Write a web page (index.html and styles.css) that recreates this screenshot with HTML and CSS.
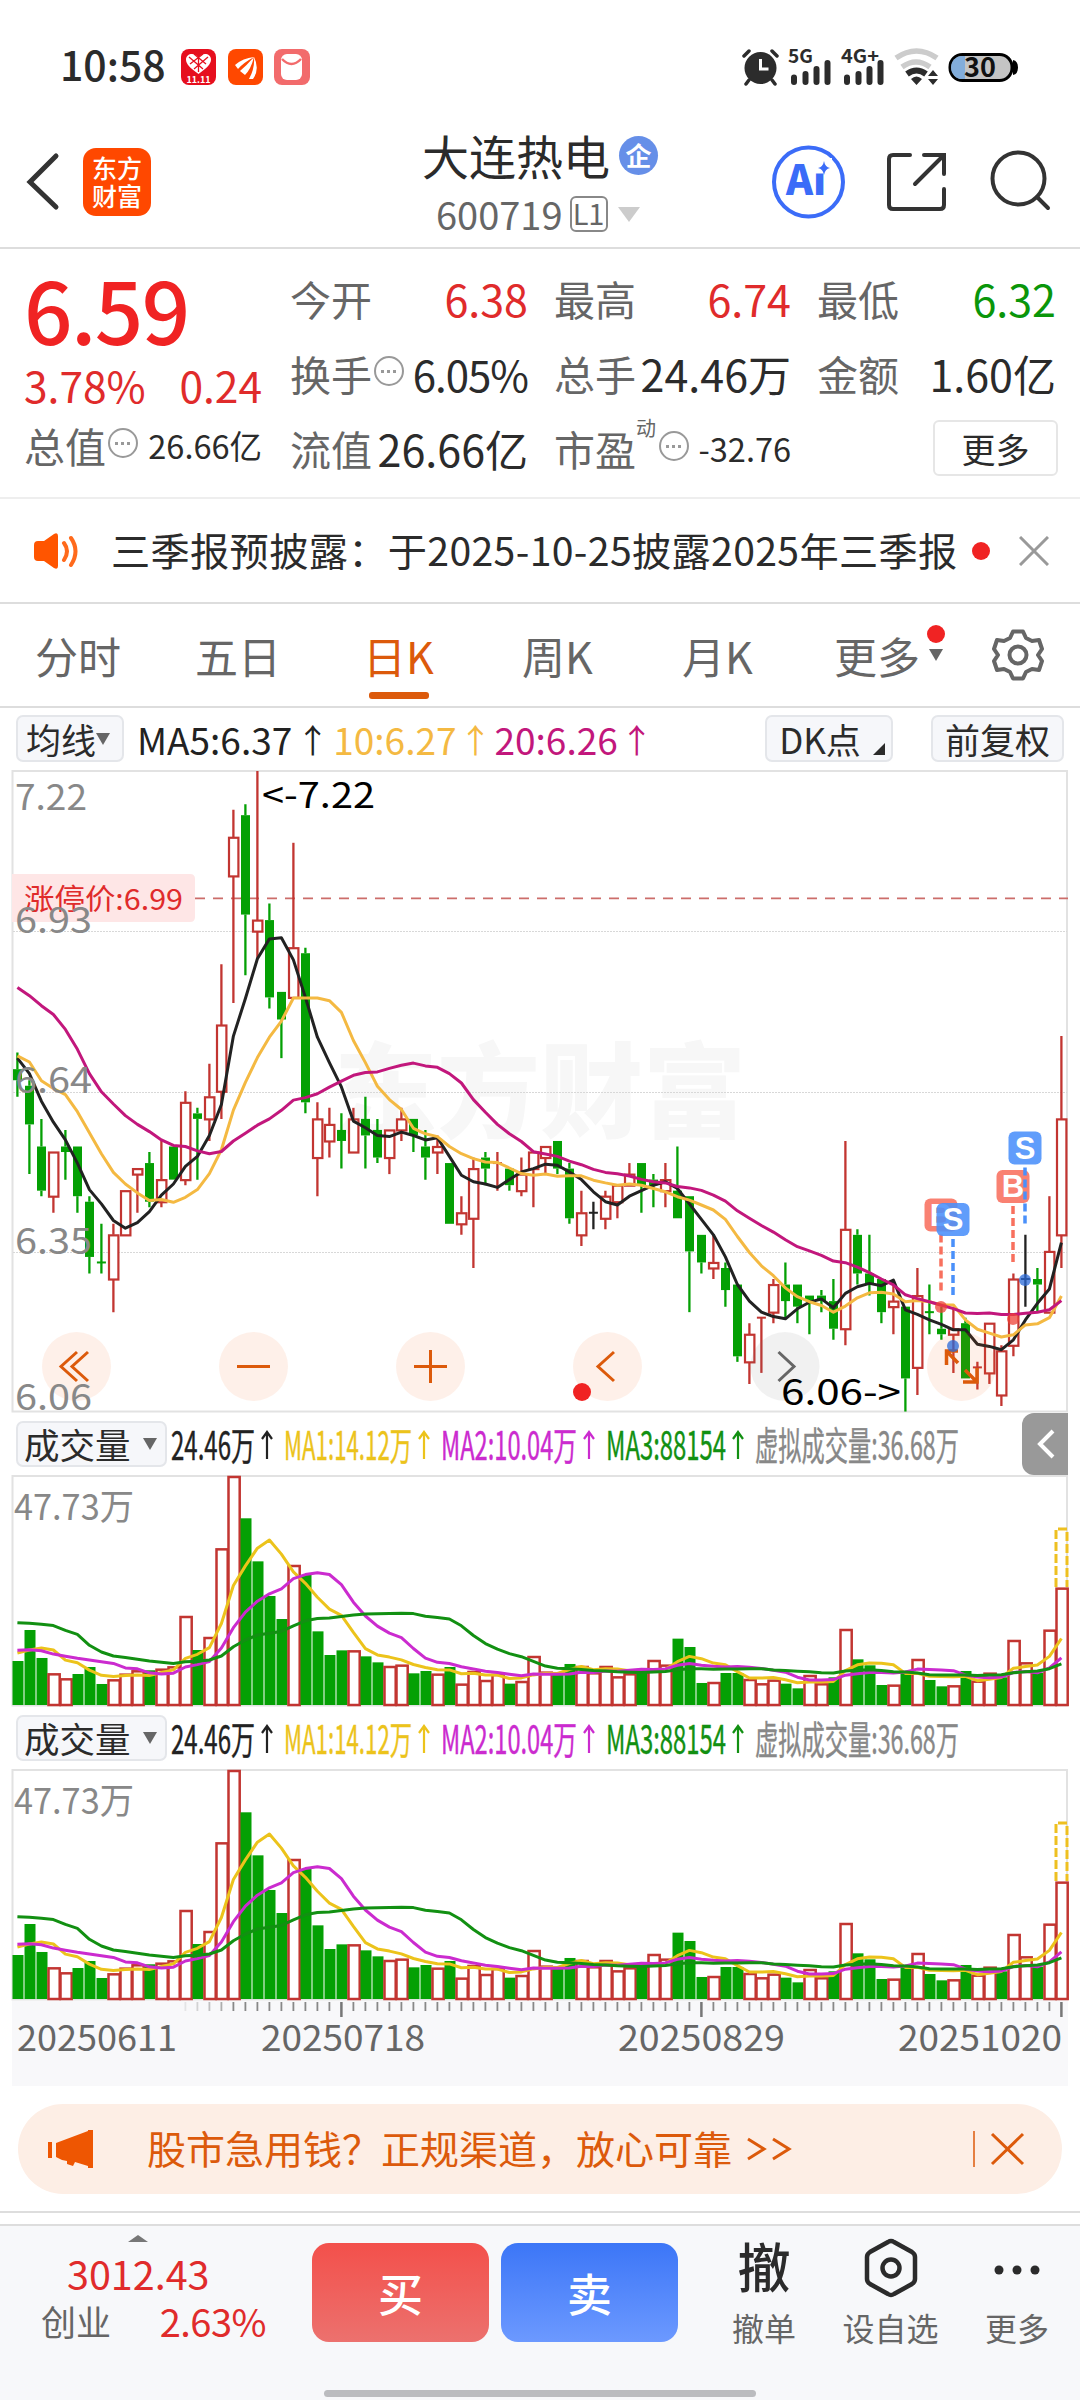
FILE: index.html
```html
<!DOCTYPE html>
<html lang="zh-CN">
<head>
  <meta charset="UTF-8" />
  <meta name="viewport" content="width=device-width, initial-scale=1.0"/>
  <title>大连热电 600719</title>
  <link rel="stylesheet" href="styles.css">
</head>
<body>
  <div class="status">
    <span class="clock">10:58</span>
    <svg class="apps" width="130" height="36" viewBox="0 0 130 36">
      <rect width="35" height="36" rx="8" fill="#e60f1e"/>
      <path d="M17.500 25C9 19 5 15 5 10.500C5 4 14 3 17.500 8.500C21 3 30 4 30 10.500C30 15 26 19 17.500 25Z" fill="#fff"/>
      <path d="M8 8l14 12M13 5l12 10M27 8L13 20M22 5L9 15M17.500 8v15" stroke="#e60f1e" stroke-width="1.300"/>
      <text x="17.500" y="34" class="mini">11.11</text>
      <rect x="47" width="35" height="36" rx="8" fill="#ff4800"/>
      <path d="M54 16Q62 9 73 8Q62 14 57 20ZM59 22Q66 16 73 8Q70 20 64 26ZM68 30Q74 19 73 8Q79 20 72 30Z" fill="#fff"/>
      <rect x="93" width="36" height="36" rx="8" fill="#f26b6c"/>
      <rect x="100" y="5" width="21" height="26" rx="6" fill="#fff"/>
      <path d="M101 10q9.500 10 19 0" fill="none" stroke="#f26b6c" stroke-width="2.500"/>
    </svg>
    <svg class="signals" width="280" height="42" viewBox="740 46 280 42">
      <circle cx="760.500" cy="68" r="16" fill="#2c2c2c"/>
      <path d="M744 56l5-5M777 56l-5-5M749 80l-3 4M772 80l3 4" stroke="#2c2c2c" stroke-width="3.500" fill="none" stroke-linecap="round"/>
      <path d="M760.500 59v10h8" stroke="#fff" stroke-width="3" fill="none"/>
      <text x="788" y="63" class="net" textLength="25" lengthAdjust="spacingAndGlyphs">5G</text>
      <text x="841" y="63" class="net" textLength="38" lengthAdjust="spacingAndGlyphs">4G+</text>
      <path d="M794 77.500v4.500M805.500 74v8M816.500 69v13M827.500 63v19M847 77.500v4.500M858.500 74v8M869.500 69v13M880.500 63v19" stroke="#2c2c2c" stroke-width="6" stroke-linecap="round"/>
      <path d="M896 58q20.500-14 41 0M902 67q14-10 28 0" stroke="#ccc" stroke-width="5.500" fill="none"/>
      <path d="M907 74q9.500-7 19 0" stroke="#2c2c2c" stroke-width="6" fill="none"/>
      <path d="M911 79q5.500-5 11 0l-5.500 6zM928 76l5-6 5 6zM928 79h10l-5 6z" fill="#2c2c2c"/>
      <rect x="950" y="54.500" width="62" height="26" rx="12.500" fill="#c4c4c4" stroke="#000" stroke-width="3"/>
      <path d="M965 56h-3a11 11.500 0 0 0 0 23h3z" fill="#82addb"/>
      <path d="M1013 60q5 1 5 7.500t-5 7.500z" fill="#000"/>
      <text x="980" y="77" class="batt">30</text>
    </svg>
  </div>

  <div class="header">
    <svg class="back" width="34" height="60" viewBox="26 152 34 60"><path d="M56 156L30 182L56 207" fill="none" stroke="#333" stroke-width="5" stroke-linecap="round"/></svg>
    <div class="logo">东方<br>财富</div>
    <div class="title">
      <div class="name">大连热电<i>企</i></div>
      <div class="code">600719<b>L1</b><em></em></div>
    </div>
    <svg class="acts" width="290" height="74" viewBox="770 145 290 74" fill="none" stroke="#333" stroke-width="4">
      <circle cx="808.500" cy="182" r="34.500" stroke="#3b6cf8"/>
      <text x="786" y="195" class="ai">Ai</text>
      <path d="M814 158h18v15.500h-18z" fill="#fff" stroke="none"/>
      <path d="M824 161q1 6 6 7q-5 1-6 7q-1-6-6-7q5-1 6-7z" fill="#3b6cf8" stroke="none"/>
      <path d="M910 155h-17q-4 0-4 4v46q0 4 4 4h47q4 0 4-4v-16M924 155h20v19M943 156l-28 28" stroke-linecap="round"/>
      <circle cx="1018.500" cy="178.500" r="26"/><path d="M1037 197l11 11" stroke-linecap="round"/>
    </svg>
  </div>

  <div class="quote">
    <div class="price">
      <div class="now">6.59</div>
      <div class="chg"><span>3.78%</span><span>0.24</span></div>
      <div class="cell total"><label>总值</label><u></u><span class="small">26.66亿</span></div>
    </div>
    <div class="grid">
      <div class="cell"><label>今开</label><span class="red">6.38</span></div>
      <div class="cell"><label>最高</label><span class="red">6.74</span></div>
      <div class="cell"><label>最低</label><span class="green">6.32</span></div>
      <div class="cell"><label>换手</label><u></u><span class="pct">6.05%</span></div>
      <div class="cell"><label>总手</label><span>24.46万</span></div>
      <div class="cell"><label>金额</label><span>1.60亿</span></div>
      <div class="cell"><label>流值</label><span>26.66亿</span></div>
      <div class="cell"><label>市盈</label><sup>动</sup><u></u><span class="small">-32.76</span></div>
      <div class="cell"><button class="more">更多</button></div>
    </div>
  </div>

  <div class="notice">
    <svg width="46" height="40" viewBox="34 530 46 40">
      <path d="M38 540h6l10-7q4-2 4 2v30q0 4-4 2l-10-7h-6q-4 0-4-4v-12q0-4 4-4z" fill="#ff5500"/>
      <path d="M64 542q6 8 0 17M71 537q9 13 0 27" fill="none" stroke="#ff6a1c" stroke-width="4" stroke-linecap="round"/>
    </svg>
    <span>三季报预披露：于2025-10-25披露2025年三季报</span>
    <i></i>
    <svg class="close" width="30" height="30" viewBox="0 0 30 30"><path d="M1 1l28 28M29 1L1 29" stroke="#999" stroke-width="3"/></svg>
  </div>

  <div class="tabs">
    <span>分时</span><span>五日</span><span class="on">日K</span><span>周K</span><span>月K</span>
    <span class="tabmore">更多<em></em><i></i></span>
    <svg width="54" height="54" viewBox="-27 -27 54 54" fill="none" stroke="#666" stroke-width="4">
      <path d="M-5-23.500H5L8-17L14-14L21-15L24-6L20 0L24 6L21 15L14 14L8 17L5 23.500H-5L-8 17L-14 14L-21 15L-24 6L-20 0L-24-6L-21-15L-14-14L-8-17Z" stroke-linejoin="round"/>
      <circle r="8.500"/>
    </svg>
  </div>

  <div class="matool">
    <button class="tag">均线<em></em></button>
    <span class="ma5">MA5:6.37</span><span class="ar ma5">↑</span>
    <span class="ma10">10:6.27</span><span class="ar ma10">↑</span>
    <span class="ma20">20:6.26</span><span class="ar ma20">↑</span>
    <button class="tag dk">DK点<s></s></button>
    <button class="tag fq">前复权</button>
  </div>

  <svg class="chart" id="kline" width="1080" height="643" viewBox="0 770 1080 643"></svg>

  <div class="volume"></div>
  <div class="volume"></div>

  <svg class="chart" id="axis" width="1080" height="85" viewBox="0 2001 1080 85"></svg>

  <div class="promo">
    <svg width="46" height="44" viewBox="48 2126 46 44" fill="#ee5602"><path d="M48 2141h4v16h-4zM56 2142L88 2130V2129H93V2167H88V2165L75 2161L73 2165L67 2163V2160L62 2159L56 2156Z"/></svg>
    <span>股市急用钱？正规渠道，放心可靠</span>
    <svg class="gg" width="46" height="26" viewBox="0 0 46 26"><path d="M2 3l16 10L2 23M27 3l16 10L27 23" fill="none" stroke="#dc5a0b" stroke-width="3"/></svg>
    <svg class="pclose" width="52" height="38" viewBox="0 0 52 38"><path d="M1 1v36" stroke="#dc5a0b" stroke-width="1.500"/><path d="M19 4l31 30M50 4L19 34" stroke="#dc5a0b" stroke-width="3"/></svg>
  </div>

  <div class="bottom">
    <div class="index">
      <em></em>
      <strong>3012.43</strong>
      <p><span>创业</span><b>2.63%</b></p>
    </div>
    <button class="buy">买</button>
    <button class="sell">卖</button>
    <div class="act"><span class="big">撤</span><span>撤单</span></div>
    <div class="act wide">
      <svg width="56" height="62" viewBox="-28 -31 56 62" fill="none" stroke="#2b2b2b" stroke-width="4.500"><path d="M-3-26Q0-28 3-26L21-16Q24-14 24-11V11Q24 14 21 16L3 26Q0 28-3 26L-21 16Q-24 14-24 11V-11Q-24-14-21-16Z"/><circle r="8.500"/></svg>
      <span>设自选</span>
    </div>
    <div class="act">
      <svg width="56" height="62" viewBox="-28 -31 56 62" fill="#2b2b2b"><circle cx="-18" cy="2" r="4.500"/><circle cy="2" r="4.500"/><circle cx="18" cy="2" r="4.500"/></svg>
      <span>更多</span>
    </div>
    <div class="home"></div>
  </div>

  <script src="chart.js"></script>
</body>
</html>
```

FILE: styles.css
```css
* {
  box-sizing: border-box;
}
body {
  margin: 0;
  width: 1080px;
  height: 2400px;
  overflow: hidden;
  background: #fff;
  color: #2b2b2b;
  font-family: "Noto Sans CJK SC", "Noto Sans", sans-serif;
  line-height: 1;
}
svg {
  display: block;
  flex: none;
}
i, em, u, s, b, strong {
  font-style: normal;
  text-decoration: none;
}
button {
  font-family: inherit;
  padding: 0;
  white-space: nowrap;
}
span, label {
  white-space: nowrap;
}
.red { color: #e02b2b; }
.green { color: #0a960a; }

/* status bar */
.status {
  display: flex;
  height: 88px;
  padding: 49px 60px 0 60px;
}
.clock {
  width: 121px;
  margin-top: -6px;
  font-size: 41px;
  font-weight: 500;
}
.signals {
  margin: -3px 0 0 auto;
}
.mini { font-size: 9px; font-weight: bold; fill: #fff; text-anchor: middle; }
.net { font: bold 19px "Noto Sans CJK SC", sans-serif; fill: #2c2c2c; }
.batt { font: bold 27px "Noto Sans CJK SC", sans-serif; fill: #111; text-anchor: middle; }

/* title bar */
.header {
  display: flex;
  height: 161px;
  padding: 0 20px 0 26px;
  border-bottom: 2px solid #ddd;
}
.back { margin-top: 64px; }
.logo {
  width: 68px;
  height: 68px;
  margin: 60px 0 0 23px;
  padding-top: 5px;
  border-radius: 13px;
  background: #ff4800;
  color: #fff;
  font-size: 25px;
  font-weight: 500;
  line-height: 28px;
  text-align: center;
}
.title {
  width: 240px;
  margin-left: 271px;
}
.name {
  display: flex;
  align-items: center;
  margin-top: 43px;
  font-size: 47px;
}
.name i {
  width: 39px;
  height: 39px;
  margin: 1px 0 0 9px;
  border-radius: 50%;
  background: #668fe8;
  color: #fff;
  font-size: 26px;
  font-weight: bold;
  line-height: 37px;
  text-align: center;
}
.code {
  display: flex;
  align-items: center;
  margin: 17px 0 0 14px;
  color: #666;
  font-size: 38px;
}
.code b {
  width: 38px;
  height: 36px;
  margin-left: 7px;
  border: 2px solid #888;
  border-radius: 6px;
  font-size: 29px;
  font-weight: 400;
  line-height: 29px;
  text-align: center;
}
.code em {
  margin-left: 10px;
  border: 11px solid transparent;
  border-top: 15px solid #ccc;
  border-bottom: 0;
}
.acts { margin: 57px 0 0 auto; }
.ai { font: 900 41px "Noto Sans CJK SC", sans-serif; fill: #3b6cf8; stroke: none; }

/* quote */
.quote {
  display: flex;
  height: 250px;
  border-bottom: 2px solid #eee;
}
.price {
  width: 262px;
  padding-left: 24px;
}
.now {
  margin-top: 16px;
  color: #f02323;
  font-size: 85px;
  font-weight: 500;
  letter-spacing: -1.500px;
}
.chg {
  display: flex;
  justify-content: space-between;
  margin-top: 14px;
  color: #e02b2b;
  font-size: 42.500px;
}
.total {
  margin-top: 14px;
}
.cell {
  display: flex;
  align-items: center;
  height: 75px;
  font-size: 43px;
}
.total.cell { height: 50px; }
.cell label {
  color: #666;
  font-size: 41px;
}
.cell span {
  margin-left: auto;
}
.cell .pct {
  font-size: 42px;
  letter-spacing: -1px;
}
.cell .small {
  font-size: 32.500px;
}
.cell u {
  position: relative;
  width: 30px;
  height: 30px;
  margin: -5px 0 0 2px;
  border: 2px solid #999;
  border-radius: 50%;
}
.cell u::after {
  content: "";
  position: absolute;
  left: 5px;
  top: 12px;
  width: 3px;
  height: 3px;
  background: #999;
  box-shadow: 6px 0 #999, 12px 0 #999;
}
.cell sup {
  margin-top: -42px;
  color: #666;
  font-size: 20px;
}
.cell sup + u { margin-left: 3px; }
.grid {
  display: grid;
  grid-template-columns: 238px 237px 239px;
  grid-auto-rows: 75px;
  column-gap: 26px;
  margin: 12px 0 0 28px;
}
.more {
  width: 125px;
  height: 56px;
  margin: -1px -2px 0 auto;
  border: 2px solid #e6e6e6;
  border-radius: 6px;
  background: #fff;
  color: #2b2b2b;
  font-size: 34px;
}

/* notice */
.notice {
  display: flex;
  align-items: center;
  height: 105px;
  padding-left: 34px;
  border-bottom: 2px solid #ddd;
}
.notice span {
  width: 859px;
  margin-top: -2px;
  padding-left: 31px;
  font-size: 39.200px;
  letter-spacing: .350px;
}
.notice i {
  width: 18px;
  height: 18px;
  margin-left: 33px;
  border-radius: 50%;
  background: #f02323;
}
.notice .close { margin-left: 29px; }

/* tabs */
.tabs {
  display: flex;
  height: 104px;
  padding: 30px 0 0 35px;
  border-bottom: 2px solid #ddd;
  color: #666;
  font-size: 43px;
}
.tabs span { width: 160px; }
.tabs .on {
  position: relative;
  width: 159px;
  padding-left: 8px;
  color: #dc5a0b;
}
.tabs .on::after {
  content: "";
  position: absolute;
  left: 14px;
  top: 58px;
  width: 60px;
  height: 7px;
  border-radius: 3px;
  background: #dc5a0b;
}
.tabs .on ~ span { padding-left: 8px; }
.tabs .on ~ .tabmore {
  position: relative;
  width: 157px;
  padding-left: 0;
}
.tabs em {
  position: absolute;
  left: 95px;
  top: 15px;
  border: 7px solid transparent;
  border-top: 12px solid #666;
  border-bottom: 0;
}
.tabs i {
  position: absolute;
  left: 93px;
  top: -9px;
  width: 18px;
  height: 18px;
  border-radius: 50%;
  background: #f02323;
}
.tabs svg { margin-top: -6px; }

/* indicator row */
.matool {
  display: flex;
  height: 62px;
  padding: 7px 0 0 16px;
  font-size: 37px;
  line-height: 48px;
}
.tag {
  position: relative;
  height: 47px;
  border: 2px solid #e4e6ea;
  border-radius: 7px;
  background: #f6f7fa;
  color: #2b2b2b;
  font-size: 35px;
  line-height: 42px;
}
.matool .tag:first-child {
  display: flex;
  align-items: center;
  width: 108px;
  margin-right: 13px;
  padding-left: 8px;
}
.tag em {
  border: 7px solid transparent;
  border-top: 12px solid #666;
  border-bottom: 0;
}
.ma5 { color: #222; }
.ma10 { color: #f4b942; }
.ma20 { color: #c2177c; }
.ar {
  width: 38px;
  font-size: 33px;
  text-align: center;
}
.ar.ma5 { width: 41px; }
.matool .dk {
  width: 128px;
  margin-left: auto;
  padding-right: 18px;
}
.dk s {
  position: absolute;
  right: 6px;
  bottom: 5px;
  border-left: 12px solid transparent;
  border-bottom: 12px solid #2b2b2b;
}
.matool .fq {
  width: 133px;
  margin: 0 16px 0 38px;
}

/* charts */
.chart text { font-size: 36px; }
.scale { fill: #888; }
.frame { fill: none; stroke: #e2e2e2; stroke-width: 2; }
.dots { stroke: #d8d8d8; stroke-width: 1; stroke-dasharray: 2 1; }
.wm { font-weight: 900; fill: #f7f7f7; }
.line { fill: none; stroke-width: 3; stroke-linejoin: round; }
.volbar {
  display: flex;
  align-items: center;
  height: 62px;
  padding-left: 16px;
}
.volbar .tag {
  display: flex;
  align-items: center;
  justify-content: space-between;
  width: 151px;
  height: 46px;
  padding: 0 8px 0 6px;
  font-size: 35.500px;
}
.volbar svg text { font-size: 39px; }
.fold {
  width: 46px;
  height: 62px;
  margin-left: auto;
  margin-right: 12px;
  padding: 16px 0 0 15px;
  border-radius: 12px 0 0 12px;
  background: #999;
}

/* promo */
.promo {
  display: flex;
  align-items: center;
  width: 1044px;
  height: 90px;
  margin: 18px 18px 30px;
  padding-left: 30px;
  border-radius: 45px;
  background: #fdeee5;
  color: #dc5a0b;
  font-size: 39px;
}
.promo span { margin: -4px 0 0 53px; }
.promo .gg { margin-left: 14px; }
.promo .pclose { margin-left: auto; margin-right: 37px; }

/* bottom bar */
.bottom {
  position: relative;
  display: flex;
  height: 176px;
  border-top: 2px solid #ddd;
  box-shadow: 0 -11px #fff, 0 -13px #ddd;
  background: #f7f8fa;
}
.index {
  width: 276px;
  padding: 9px 0 0 41px;
  margin-right: 36px;
}
.index em {
  display: block;
  width: 0;
  margin-left: 87px;
  border: 10px solid transparent;
  border-bottom: 7px solid #777;
  border-top: 0;
}
.index strong {
  display: block;
  margin: 11px 0 0 26px;
  color: #e02b2b;
  font-size: 39.500px;
  font-weight: 400;
}
.index p {
  display: flex;
  align-items: center;
  justify-content: space-between;
  width: 225px;
  margin: 9px 0 0;
  color: #666;
  font-size: 35px;
}
.index b {
  color: #e02b2b;
  font-size: 38px;
  font-weight: 400;
  letter-spacing: -0.500px;
}
.buy, .sell {
  width: 177px;
  height: 99px;
  margin-top: 17px;
  border: 0;
  border-radius: 17px;
  color: #fff;
  font-size: 45px;
  font-weight: 500;
}
.buy { background: linear-gradient(#f3504b, #ec716e); }
.sell { margin-left: 12px; background: linear-gradient(#3c76f7, #6c99ff); }
.act {
  display: flex;
  flex-direction: column;
  align-items: center;
  width: 126px;
  padding-top: 11px;
  margin-left: 23px;
  color: #666;
  font-size: 32px;
}
.act svg, .big {
  height: 62px;
  margin-bottom: 12px;
}
.act .big {
  color: #2b2b2b;
  font-size: 53px;
  font-weight: 500;
  line-height: 56px;
}
.act + .act { margin-left: 0; }
.act.wide { width: 127px; }
.home {
  position: absolute;
  left: 324px;
  bottom: 3px;
  width: 432px;
  height: 7px;
  border-radius: 4px;
  background: #bbbcbf;
}
```

FILE: chart.js
```js
// high, body top, body bottom, low (in cents) and r = up, g = down, k = flat
const candles = `671 668 666 663 g,666 665 658 649 g,659 654 646 645 g,653 653 645 642 r,657 654 653 648 g,654 654 645 642 g,645 644 634 631 g,640 633 633 631 g,
640 638 630 624 r,646 646 638 638 r,650 650 649 642 r,653 651 644 643 g,655 648 644 643 r,654 654 648 648 g,664 662 648 647 r,661 660 659 648 g,
669 663 659 655 r,687 676 664 659 r,715 710 703 680 r,716 714 696 685 g,722 695 693 688 r,698 695 681 679 g,682 682 677 670 g,709 690 681 681 r,
690 689 662 660 g,662 659 652 645 r,661 658 655 652 r,660 657 655 650 g,661 659 653 653 r,663 659 656 650 g,659 657 652 651 g,657 657 652 649 r,
661 659 657 655 r,659 659 656 653 g,657 654 652 648 g,656 654 653 649 r,651 651 640 640 g,645 642 640 638 r,652 650 641 632 r,653 652 650 647 g,
653 651 651 646 r,650 650 647 646 g,652 649 646 645 r,653 653 650 643 r,654 654 652 649 r,655 655 650 649 g,651 650 641 640 g,646 642 638 636 r,
644 642 642 639 k,646 645 641 639 r,647 647 644 641 r,651 649 647 647 r,651 651 647 642 g,649 648 647 643 g,651 648 646 643 r,654 646 641 641 g,
645 645 635 624 g,638 638 633 631 g,638 633 632 630 r,633 632 628 625 g,629 629 616 615 g,622 620 615 611 r,623 623 623 613 r,630 629 624 622 r,
633 629 626 623 g,629 629 625 622 g,627 627 626 620 g,628 627 626 624 g,630 626 621 619 g,655 639 621 618 r,639 638 631 629 g,638 631 629 627 g,
630 630 624 622 g,629 626 625 620 r,625 625 612 606 g,632 627 614 609 r,629 624 624 620 g,625 621 620 619 g,625 621 620 613 r,623 622 612 612 g,
615 614 614 610 r,622 622 613 611 r,618 617 609 607 r,631 630 618 616 r,638 630 630 625 k,632 630 629 624 g,645 635 624 624 r,674 659 638 632 r`
  .split(",").map(s => s.trim().split(" ")).map(a => ({ h: +a[0], t: +a[1], b: +a[2], l: +a[3], c: a[4] }));

const vols = [9.17, 15.63, 9.8, 6.6, 5.56, 6.46, 7.92, 4.38, 5.35, 6.53, 7.23, 7.23, 7.57, 8.06, 18.55, 11.46, 14.17, 32.65, 47.73, 38.91,
  29.94, 22.72, 17.92, 29.18, 27.1, 15.35, 10.42, 11.39, 11.39, 10.14, 8.89, 8.13, 8.41, 6.6, 7.09, 6.53, 7.92, 4.45, 7.09, 5.21,
  6.46, 4.45, 5, 10.21, 6.95, 6.25, 8.55, 8.13, 6.81, 8.13, 5.97, 6.6, 6.95, 9.38, 8.41, 13.83, 12.09, 4.59, 4.79, 6.67,
  6.67, 5.42, 4.52, 5.28, 4.45, 3.47, 6.25, 4.52, 5.77, 15.84, 9.52, 8.27, 4.17, 4.24, 6.74, 9.59, 5.21, 3.89, 4.1, 7.09,
  5.07, 6.74, 5.77, 13.55, 8.89, 6.74, 15.7, 24.46];

const closes = candles.map(k => k.c === "r" ? k.t : k.b);
const RED = "#c23531", GREEN = "#04a004";
const X = i => 17.4 + 12 * i;
const Y = p => 771 + (722 - p) * 5.522;

// moving average; the first values come from days before the visible range
function ma(list, n, seed) {
  return list.map((v, i) => i < seed.length ? seed[i] : list.slice(i - n + 1, i + 1).reduce((a, b) => a + b) / n);
}
function line(list, y, color) {
  return `<polyline class="line" stroke="${color}" points="${list.map((v, i) => X(i) + "," + y(v).toFixed(1)).join(" ")}"/>`;
}
function text(x, y, s, len, extra) {
  return `<text x="${x}" y="${y}" textLength="${len}" lengthAdjust="spacingAndGlyphs" ${extra || ""}>${s}</text>`;
}

function drawKline() {
  let s = text(334, 1130, "东方财富", 412, 'class="wm" style="font-size:103px"');
  s += '<rect class="frame" x="12.500" y="771" width="1054.500" height="640.500"/>';
  [931.500, 1092.500, 1252.500].forEach(y => s += `<path class="dots" d="M13 ${y}H1067"/>`);
  s += '<path d="M195 898.300H1068" stroke="#cc6d6a" stroke-width="1.800" stroke-dasharray="10 8"/>';
  s += '<path d="M12 874H190q5 0 5 5V917q0 5-5 5H12z" fill="#fee6e6"/>' + text(24, 910, "涨停价:6.99", 159, 'fill="#e02b2b" style="font-size:29px"');

  candles.forEach((k, i) => {
    const x = X(i), col = k.c === "r" ? RED : k.c === "g" ? GREEN : "#222";
    const t = Y(k.t), b = Y(k.b);
    s += `<path d="M${x} ${Y(k.h)}V${t}M${x} ${b}V${Y(k.l)}" stroke="${col}" stroke-width="2.300"/>`;
    if (k.t === k.b) s += `<path d="M${x - 4.500} ${t}h9" stroke="${col}" stroke-width="2"/>`;
    else if (k.c === "g") s += `<rect x="${x - 4.400}" y="${t}" width="9" height="${b - t}" fill="${col}"/>`;
    else s += `<rect x="${x - 4.400}" y="${t + .500}" width="9.400" height="${b - t}" fill="#fff" stroke="${col}" stroke-width="2.200"/>`;
  });

  s += line(ma(closes, 5, [670, 667.2, 662.2, 658.4]), Y, "#222");
  s += line(ma(closes, 10, [670.4, 669.3, 665.9, 664.5, 663.4, 660.3, 656.5, 652.7, 649.3]), Y, "#f4b942");
  s += line(ma(closes, 20, [682.8, 681.3, 679.5, 677.9, 675.2, 671.6, 667.2, 663.9, 661.7, 659.6, 658, 656.7, 655.2, 654.2, 654, 653.2, 652.7, 653.1, 655]), Y, "#c2177c");

  // round control buttons
  [76.500, 253.500, 430.500, 607.500, 785, 961.500].forEach((x, i) =>
    s += `<circle cx="${x}" cy="1366.500" r="34.500" fill="${i === 4 ? "#777" : "#f2702c"}" fill-opacity=".1"/>`);
  s += `<g fill="none" stroke="#dc5a0b" stroke-width="3">
    <path d="M77 1352L61 1366.500L77 1381M88 1352L72 1366.500L88 1381M237 1366.500H270M414 1366.500H447M430.500 1350V1383M614 1352L598 1366.500L614 1381"/>
    <path d="M958 1351H946.500V1365M946.500 1351L958 1363M965 1370L977 1382M963 1382H977V1368" stroke-width="3.500"/>
    <path d="M778.500 1352L794 1366.500L778.500 1381" stroke="#666"/></g>`;
  s += '<circle cx="582" cy="1392" r="9" fill="#f02323"/>';

  // trade marks: x, box top, dot y, side
  [[941, 1198.500, 1307, "B"], [953, 1203, 1346, "S"], [1013, 1170, 1319, "B"], [1025, 1131.500, 1280, "S"]].forEach(m => {
    const c = m[3] === "B" ? "#f8705e" : "#4a90fa";
    s += `<g><path d="M${m[0]} ${m[1] + 36}v57" stroke="${c}" stroke-width="3.500" stroke-dasharray="8 4"/>
      <circle cx="${m[0]}" cy="${m[2]}" r="6" fill="${m[3] === "B" ? "#ee4235" : "#2a69d8"}" opacity=".75"/>
      <rect x="${m[0] - 16.500}" y="${m[1]}" width="33" height="33" rx="6" fill="${c}" opacity=".88"/>
      <text x="${m[0]}" y="${m[1] + 27}" text-anchor="middle" fill="#fff" style="font:bold 31px 'Liberation Sans',sans-serif">${m[3]}</text></g>`;
  });

  [["7.22", 810], ["6.93", 933], ["6.64", 1093], ["6.35", 1254], ["6.06", 1410]].forEach((l, i) =>
    s += text(15, l[1], l[0], i ? 77 : 72, 'class="scale"'));
  s += text(262, 808, "&lt;-7.22", 113) + text(781, 1405, "6.06-&gt;", 120);
  document.getElementById("kline").innerHTML = s;
}

function drawVolume(el) {
  const V = v => 1705 - v * 4.798;
  let s = '<rect class="frame" x="12.500" y="1476" width="1054.500" height="229.500"/>';
  vols.forEach((v, i) => {
    const up = i > 0 && closes[i] >= closes[i - 1];
    if (up) s += `<rect x="${X(i) - 4.900}" y="${V(v) + 1}" width="11.200" height="${v * 4.798 - 1}" fill="#fff" stroke="${RED}" stroke-width="2.500"/>`;
    else s += `<rect x="${X(i) - 4.900}" y="${V(v)}" width="11" height="${v * 4.798}" fill="${GREEN}"/>`;
  });
  s += '<path d="M1056 1587V1529H1067V1587" fill="none" stroke="#eec021" stroke-width="3" stroke-dasharray="9 3"/>';
  s += line(ma(vols, 5, [10.84, 11.46, 11.88, 11.46]), V, "#ecc31b");
  s += line(ma(vols, 10, [11.4, 11.53, 11.32, 10.6, 10.14, 9.73, 9.38, 9.03, 8.68]), V, "#cb2bcf");
  s += line(ma(vols, 20, [17.16, 17.02, 16.81, 16.54, 15.56, 14.73, 12.44, 11.05, 10.21, 9.87, 9.52, 9.17, 8.89, 8.68, 9.03, 9.1, 9.38, 10.21, 12.16]), V, "#129012");
  s += text(14, 1520, "47.73万", 120, 'class="scale"');

  const labels = [[171, "24.46万", 84, "#222", 267], [284, "MA1:14.12万", 128, "#ecc31b", 424],
    [441, "MA2:10.04万", 136, "#cb2bcf", 589], [606, "MA3:88154", 120, "#129012", 738], [755, "虚拟成交量:36.68万", 204, "#888"]];
  const head = labels.map(l => text(l[0], 1460, l[1], l[2], `fill="${l[3]}" stroke="${l[3]}" stroke-width=".4"`) +
    (l[4] ? `<path d="M${l[4]} 1459V1432M${l[4] - 5} 1439L${l[4]} 1432L${l[4] + 5} 1439" fill="none" stroke="${l[3]}" stroke-width="2.200"/>` : "")).join("");
  const first = el === document.querySelector(".volume");
  el.innerHTML = `<div class="volbar"><button class="tag">成交量<em></em></button>
    <svg width="800" height="62" viewBox="167 1413 800 62">${head}</svg>
    ${first ? '<div class="fold"><svg width="18" height="30" viewBox="0 0 18 30"><path d="M16 2L3 15L16 28" fill="none" stroke="#fff" stroke-width="4"/></svg></div>' : ""}</div>
    <svg class="chart" width="1080" height="232" viewBox="0 1475 1080 232">${s}</svg>`;
}

function drawAxis() {
  let s = '<rect x="12" y="2001" width="1056" height="85" fill="#f8f8fa"/>';
  for (let i = 14; i < 88; i++) {
    const big = i % 30 === 27;
    s += `<path d="M${X(i)} 2002V${big ? 2017 : 2011}" stroke="${big ? "#777" : "#888"}" stroke-width="${big ? 2.500 : 1.800}" opacity="${i < 18 ? (i - 13) / 6 : 1}"/>`;
  }
  [[17, "20250611", 160], [261, "20250718", 164], [618, "20250829", 167], [898, "20251020", 164]].forEach(l =>
    s += text(l[0], 2051, l[1], l[2], 'fill="#666"'));
  document.getElementById("axis").innerHTML = s;
}

drawKline();
document.querySelectorAll(".volume").forEach(drawVolume);
drawAxis();
```
